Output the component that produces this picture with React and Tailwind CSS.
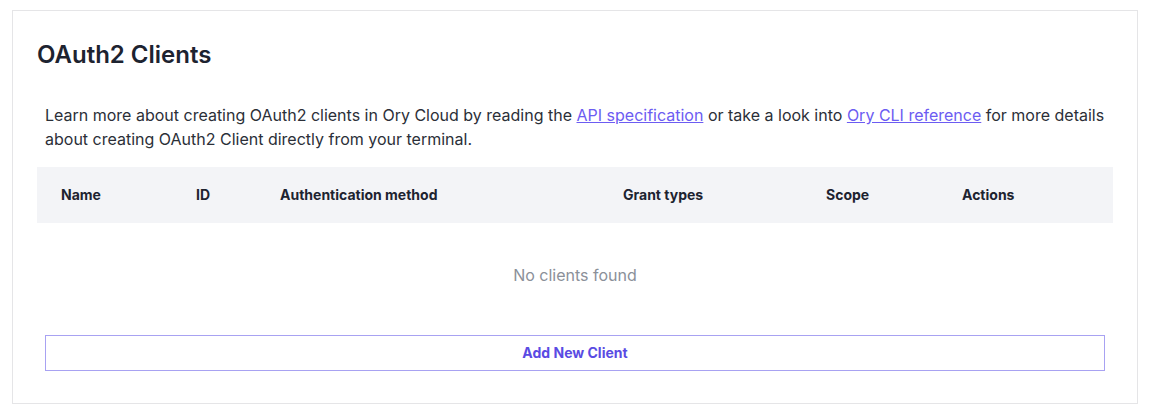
export default function App() {
  const columns = [
    { label: "Name", width: "w-[135px]" },
    { label: "ID", width: "w-[84px]" },
    { label: "Authentication method", width: "w-[343px]" },
    { label: "Grant types", width: "w-[203px]" },
    { label: "Scope", width: "w-[136px]" },
    { label: "Actions", width: "w-[175px]" },
  ];

  return (
    <div className="min-h-screen bg-white pl-[12px] pt-[10px] font-['Inter',sans-serif]">
      <div className="w-[1126px] border border-[#e5e5e7] px-6 pt-[28px] pb-[32px]">
        <h2 className="text-2xl font-semibold text-[#1d2330] leading-8">OAuth2 Clients</h2>

        <p className="mt-[32px] px-2 text-base leading-6 text-[#2b2f38]">
          Learn more about creating OAuth2 clients in Ory Cloud by reading the{" "}
          <a href="#" className="text-[#6c5cf2] underline">API specification</a> or take a look into{" "}
          <a href="#" className="text-[#6c5cf2] underline">Ory CLI reference</a> for more details about
          creating OAuth2 Client directly from your terminal.
        </p>

        <table className="mt-4 w-full table-fixed border-collapse">
          <thead>
            <tr className="bg-[#f3f4f7] h-[56px]">
              {columns.map((c) => (
                <th key={c.label} className={`${c.width} px-6 text-left text-sm font-bold text-[#1d2330]`}>
                  {c.label}
                </th>
              ))}
            </tr>
          </thead>
          <tbody>
            <tr>
              <td colSpan={6} className="pt-[40px] pb-[48px] text-center text-base leading-6 text-[#8b9099]">
                No clients found
              </td>
            </tr>
          </tbody>
        </table>

        <div className="px-2">
          <button className="w-full h-[36px] border border-[#a8a2f2] text-sm font-bold text-[#5a4be3]">
            Add New Client
          </button>
        </div>
      </div>
    </div>
  );
}
